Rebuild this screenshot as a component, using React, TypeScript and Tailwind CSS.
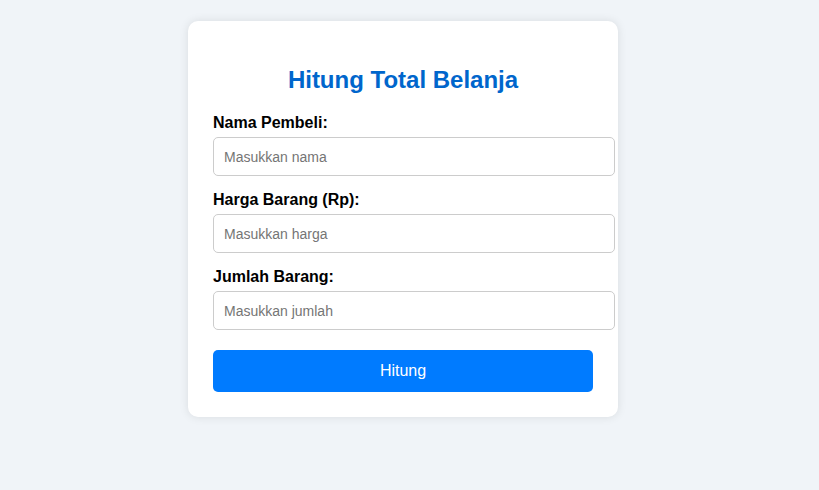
import React from "react";

export default function App() {
  const fields = [
    { label: "Nama Pembeli:", placeholder: "Masukkan nama" },
    { label: "Harga Barang (Rp):", placeholder: "Masukkan harga" },
    { label: "Jumlah Barang:", placeholder: "Masukkan jumlah" },
  ];
  return (
    <div
      className="min-h-[490px] w-full bg-[#f0f4f8] pt-[21px]"
      style={{ fontFamily: '"Liberation Sans", Arial, sans-serif' }}
    >
      <div className="ml-[188px] w-[430px] rounded-[10px] bg-white p-[25px] shadow-[0_0_10px_rgba(0,0,0,0.1)]">
        <h2 className="mb-[20px] mt-[20px] text-center text-[24px] font-bold leading-[28px] text-[#0066cc]">
          Hitung Total Belanja
        </h2>
        {fields.map((f) => (
          <div key={f.label} className="mb-[15px]">
            <label className="mb-[5px] block text-[16px] font-bold leading-[18px] text-black">
              {f.label}
            </label>
            <input
              type="text"
              placeholder={f.placeholder}
              className="block h-[39px] w-[402px] rounded-[5px] border border-[#cccccc] bg-white px-[10px] text-[14px] text-black outline-none placeholder:text-[#757575]"
            />
          </div>
        ))}
        <button className="mt-[20px] block h-[42px] w-full rounded-[5px] bg-[#007bff] text-[16px] text-white">
          Hitung
        </button>
      </div>
    </div>
  );
}
